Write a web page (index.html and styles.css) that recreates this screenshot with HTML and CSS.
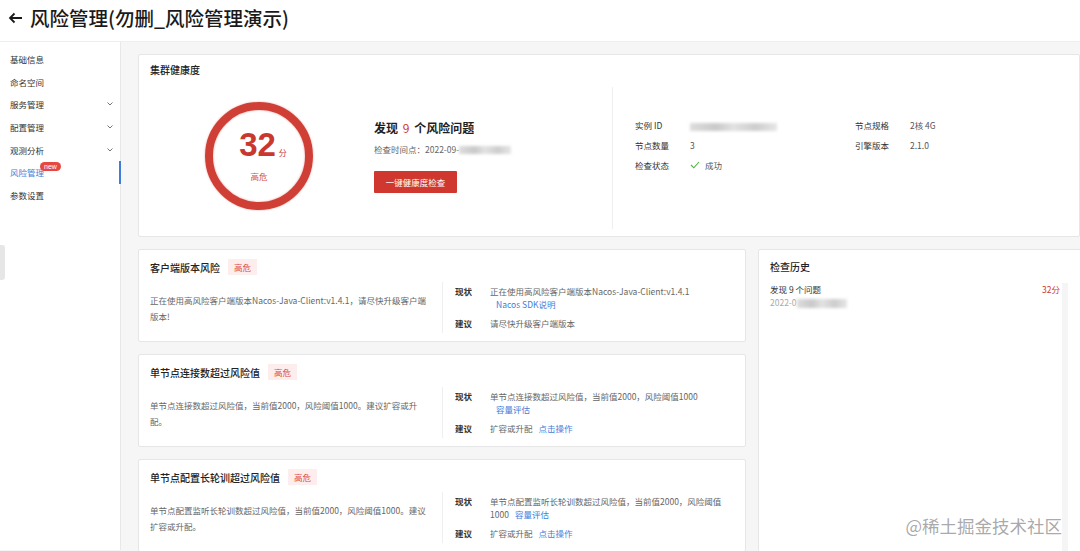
FILE: index.html
```html
<!DOCTYPE html>
<html lang="zh-CN">
<head>
  <meta charset="UTF-8">
  <title>风险管理</title>
  <link rel="stylesheet" href="styles.css">
</head>
<body>
  <header class="page-head">
    <svg class="back" width="15" height="12" viewBox="0 0 15 12"><path d="M14 6H2M6.5 1.5L2 6l4.5 4.5" fill="none" stroke="#1a1a1a" stroke-width="1.8"/></svg>
    <h1>风险管理(勿删_风险管理演示)</h1>
  </header>

  <div class="layout">
    <aside class="side">
      <a class="side-item">基础信息</a>
      <a class="side-item">命名空间</a>
      <a class="side-item">服务管理<svg class="caret" viewBox="0 0 6 4"><path d="M.5.5L3 3 5.5.5" fill="none" stroke="#666" stroke-width=".9"/></svg></a>
      <a class="side-item">配置管理<svg class="caret" viewBox="0 0 6 4"><path d="M.5.5L3 3 5.5.5" fill="none" stroke="#666" stroke-width=".9"/></svg></a>
      <a class="side-item">观测分析<svg class="caret" viewBox="0 0 6 4"><path d="M.5.5L3 3 5.5.5" fill="none" stroke="#666" stroke-width=".9"/></svg></a>
      <a class="side-item active">风险管理<span class="badge-new">new</span></a>
      <a class="side-item">参数设置</a>
    </aside>

    <main class="main">
      <section class="card health">
        <h2 class="card-title">集群健康度</h2>
        <div class="health-body">
          <div class="score-area">
            <div class="score-ring">
              <div class="score-num">32<small>分</small></div>
              <div class="score-level">高危</div>
            </div>
            <div class="summary">
              <h3>发现 <em>9</em> 个风险问题</h3>
              <p class="check-time">检查时间点：2022-09-<span class="blur blur-time"></span></p>
              <button class="btn-check">一键健康度检查</button>
            </div>
          </div>
          <dl class="info-grid">
            <dt>实例 ID</dt><dd><span class="blur blur-id"></span></dd>
            <dt>节点规格</dt><dd>2核 4G</dd>
            <dt>节点数量</dt><dd>3</dd>
            <dt>引擎版本</dt><dd>2.1.0</dd>
            <dt>检查状态</dt>
            <dd class="ok"><svg width="10" height="8" viewBox="0 0 10 8"><path d="M1 4l2.8 2.8L9 1" fill="none" stroke="#52b043" stroke-width="1.1"/></svg>成功</dd>
          </dl>
        </div>
      </section>

      <div class="lower">
        <div class="risk-list">
          <section class="card risk">
            <div class="risk-head"><h3>客户端版本风险</h3><span class="tag">高危</span></div>
            <div class="risk-body">
              <p class="risk-desc">正在使用高风险客户端版本Nacos-Java-Client:v1.4.1，请尽快升级客户端版本!</p>
              <div class="risk-detail">
                <div class="detail-row"><b>现状</b><span>正在使用高风险客户端版本Nacos-Java-Client:v1.4.1<a class="link">Nacos SDK说明</a></span></div>
                <div class="detail-row"><b>建议</b><span>请尽快升级客户端版本</span></div>
              </div>
            </div>
          </section>

          <section class="card risk">
            <div class="risk-head"><h3>单节点连接数超过风险值</h3><span class="tag">高危</span></div>
            <div class="risk-body">
              <p class="risk-desc">单节点连接数超过风险值，当前值2000，风险阈值1000。建议扩容或升配。</p>
              <div class="risk-detail">
                <div class="detail-row"><b>现状</b><span>单节点连接数超过风险值，当前值2000，风险阈值1000<a class="link">容量评估</a></span></div>
                <div class="detail-row"><b>建议</b><span>扩容或升配<a class="link">点击操作</a></span></div>
              </div>
            </div>
          </section>

          <section class="card risk">
            <div class="risk-head"><h3>单节点配置长轮训超过风险值</h3><span class="tag">高危</span></div>
            <div class="risk-body">
              <p class="risk-desc">单节点配置监听长轮训数超过风险值，当前值2000，风险阈值1000。建议扩容或升配。</p>
              <div class="risk-detail">
                <div class="detail-row"><b>现状</b><span>单节点配置监听长轮训数超过风险值，当前值2000，风险阈值1000<a class="link">容量评估</a></span></div>
                <div class="detail-row"><b>建议</b><span>扩容或升配<a class="link">点击操作</a></span></div>
              </div>
            </div>
          </section>
        </div>

        <section class="card history">
          <h2 class="card-title">检查历史</h2>
          <div class="history-wrap">
            <div class="history-items">
              <div class="history-item">
                <div class="history-line"><span>发现 9 个问题</span><span class="history-score">32分</span></div>
                <div class="history-date">2022-0<span class="blur blur-date"></span></div>
              </div>
            </div>
            <div class="scroll-track"></div>
          </div>
        </section>
      </div>
    </main>
  </div>

  <div class="side-handle"></div>
  <div class="watermark">@稀土掘金技术社区</div>
</body>
</html>
```

FILE: styles.css
```css
body {
  margin: 0;
  width: 1080px;
  height: 551px;
  overflow: hidden;
  position: relative;
  font-family: "Noto Sans CJK SC", "Noto Sans", sans-serif;
  color: #333;
  background: #f6f6f6;
}

.page-head {
  height: 42px;
  box-sizing: border-box;
  padding: 6px 0 0 8px;
  display: flex;
  align-items: flex-start;
  gap: 7px;
  background: #fff;
  border-bottom: 1px solid #efefef;
}

.back {
  margin-top: 6px;
}

.page-head h1 {
  margin: 0;
  font-size: 19.5px;
  line-height: 24px;
  font-weight: 500;
  color: #1a1a1a;
}

.layout {
  display: flex;
  height: 508px;
}

/* sidebar */
.side {
  width: 121px;
  flex: 0 0 121px;
  box-sizing: border-box;
  padding-top: 6px;
  background: #fff;
  border-right: 1px solid #e8e8e8;
}

.side-item {
  position: relative;
  display: flex;
  align-items: center;
  justify-content: space-between;
  height: 22.6px;
  padding: 0 7px 0 10px;
  font-size: 8.5px;
  color: #333;
}

.side-item.active {
  color: #3f7ddb;
}

.side-item.active::after {
  content: "";
  position: absolute;
  right: -1px;
  top: 0;
  width: 2px;
  height: 100%;
  background: #3f7ddb;
}

.caret {
  width: 6px;
  height: 4px;
}

.badge-new {
  position: absolute;
  left: 40px;
  top: 1px;
  height: 9px;
  padding: 0 4px;
  border-radius: 5px;
  background: #e5483f;
  color: #fff;
  font-family: "Liberation Sans", sans-serif;
  font-size: 7px;
  line-height: 9px;
}

.side-handle {
  position: absolute;
  left: 0;
  top: 245px;
  width: 5px;
  height: 35px;
  border-radius: 0 3px 3px 0;
  background: #e6e6e6;
}

/* main area */
.main {
  flex: 1;
  padding: 12px 0 0 17px;
  min-width: 0;
}

.card {
  background: #fff;
  border: 1px solid #e6e6e6;
  border-radius: 2px;
  box-sizing: border-box;
}

.card-title {
  margin: 0;
  font-size: 10px;
  line-height: 14px;
  font-weight: 500;
  color: #222;
}

.health {
  width: 942px;
  height: 183px;
  padding: 8px 11px 0;
}

.health-body {
  display: flex;
  height: 150px;
  margin: 4px 0 0 -11px;
}

.score-area {
  width: 473px;
  flex: 0 0 473px;
  box-sizing: border-box;
  padding-left: 66px;
  display: flex;
  align-items: center;
}

.score-ring {
  width: 108px;
  height: 108px;
  box-sizing: border-box;
  border: 8px solid #cf3f36;
  border-radius: 50%;
  display: flex;
  flex-direction: column;
  align-items: center;
  justify-content: center;
  box-shadow: 0 0 2px rgba(207, 63, 54, 0.5), inset 0 0 2px rgba(207, 63, 54, 0.5);
}

.score-num {
  font-family: "Liberation Sans", sans-serif;
  font-size: 33px;
  line-height: 30px;
  font-weight: bold;
  color: #c9382f;
  padding-left: 8px;
}

.score-num small {
  font-family: "Noto Sans CJK SC", sans-serif;
  font-size: 8px;
  font-weight: normal;
  margin-left: 3px;
}

.score-level {
  margin-top: 2px;
  font-size: 8.5px;
  line-height: 12px;
  color: #d45048;
}

.summary {
  margin-left: 61px;
}

.summary h3 {
  margin: 0;
  font-size: 12px;
  line-height: 16px;
  font-weight: 600;
  color: #1f1f1f;
}

.summary h3 em {
  font-style: normal;
  font-weight: normal;
  color: #d0382f;
  margin: 0 2px;
}

.check-time {
  margin: 7px 0 0;
  font-size: 8.5px;
  line-height: 12px;
  color: #666;
}

.btn-check {
  display: block;
  margin-top: 16px;
  width: 83px;
  height: 22px;
  border: 0;
  border-radius: 1px;
  background: #d0382f;
  color: #fff;
  font-family: inherit;
  font-size: 8.5px;
  padding: 0;
}

.blur {
  display: inline-block;
  height: 8px;
  vertical-align: middle;
  background: linear-gradient(90deg, #ddd, #c9c9c9 30%, #e2e2e2 50%, #cdcdcd 75%, #e6e6e6);
  filter: blur(1.5px);
}

.blur-time { width: 52px; }
.blur-id { width: 87px; }
.blur-date { width: 50px; height: 9px; }

.info-grid {
  align-self: stretch;
  flex: 1;
  margin: 6px 0 2px;
  padding: 28px 0 0 22px;
  border-left: 1px solid #efefef;
  display: grid;
  grid-template-columns: 55px 165px 55px 1fr;
  grid-auto-rows: 20px;
  align-content: start;
  align-items: center;
  font-size: 8.5px;
}

.info-grid dt {
  color: #333;
}

.info-grid dd {
  margin: 0;
  color: #555;
}

.info-grid .ok {
  display: flex;
  align-items: center;
  gap: 5px;
}

/* lower section */
.lower {
  display: flex;
  gap: 12px;
  margin-top: 12px;
  align-items: flex-start;
}

.risk-list {
  width: 608px;
  flex: 0 0 608px;
  display: flex;
  flex-direction: column;
  gap: 12px;
}

.risk {
  height: 93px;
  padding-top: 9px;
}

.risk-head {
  display: flex;
  align-items: center;
  gap: 8px;
  height: 16px;
  padding-left: 11px;
}

.risk-head h3 {
  margin: 0;
  font-size: 10px;
  font-weight: 500;
  color: #222;
}

.tag {
  height: 16px;
  padding: 0 6px;
  background: #fdeeed;
  color: #dd4a40;
  font-size: 8.5px;
  line-height: 16px;
}

.risk-body {
  display: flex;
  align-items: center;
  height: 53px;
  margin-top: 6px;
}

.risk-desc {
  width: 303px;
  flex: 0 0 303px;
  box-sizing: border-box;
  margin: 0;
  padding: 0 13px 0 11px;
  font-size: 8.5px;
  line-height: 16px;
  color: #666;
}

.risk-detail {
  border-left: 1px solid #efefef;
  padding: 3px 0 3px 12px;
  display: flex;
  flex-direction: column;
  gap: 6px;
}

.detail-row {
  display: flex;
  font-size: 8.5px;
  line-height: 13px;
  color: #666;
}

.detail-row b {
  width: 35px;
  flex: 0 0 35px;
  font-weight: 600;
  color: #333;
}

.detail-row span {
  width: 238px;
}

.link {
  display: inline-block;
  margin-left: 6px;
  white-space: nowrap;
  color: #3f7ddb;
}

/* history */
.history {
  flex: 0 0 330px;
  height: 320px;
  padding: 9px 19px 0 11px;
}

.history .card-title {
  line-height: 16px;
}

.history-wrap {
  display: flex;
  margin-top: 8px;
}

.history-items {
  flex: 1;
  margin-right: 2px;
}

.history-line {
  display: flex;
  justify-content: space-between;
  font-size: 8.5px;
  line-height: 13px;
  color: #333;
}

.history-score {
  color: #d0382f;
}

.history-date {
  font-size: 8.5px;
  line-height: 12px;
  color: #aaa;
}

.scroll-track {
  width: 6px;
  height: 280px;
  background: #f5f5f5;
}

.watermark {
  position: absolute;
  right: 18px;
  bottom: 14px;
  font-size: 17.5px;
  line-height: 22px;
  color: rgba(120, 120, 120, 0.65);
}
```
